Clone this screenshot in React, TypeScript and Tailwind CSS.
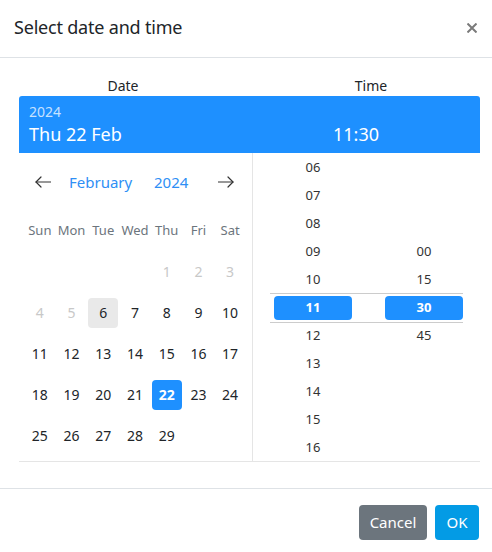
import React from "react";

const font = { fontFamily: '"Noto Sans", "Open Sans", sans-serif' };

function ArrowLeft() {
  return (
    <svg width="16" height="12" viewBox="0 0 16 12" fill="none" stroke="#333" strokeWidth="1.2" strokeLinecap="round" strokeLinejoin="round">
      <path d="M15.5 6H1" />
      <path d="M6 1L1 6l5 5" />
    </svg>
  );
}
function ArrowRight() {
  return (
    <svg width="16" height="12" viewBox="0 0 16 12" fill="none" stroke="#333" strokeWidth="1.2" strokeLinecap="round" strokeLinejoin="round">
      <path d="M0.5 6H15" />
      <path d="M10 1l5 5-5 5" />
    </svg>
  );
}

const weekdays = ["Sun", "Mon", "Tue", "Wed", "Thu", "Fri", "Sat"];
type Cell = { d: number | null; muted?: boolean; today?: boolean; sel?: boolean };
const rows: Cell[][] = [
  [{ d: null }, { d: null }, { d: null }, { d: null }, { d: 1, muted: true }, { d: 2, muted: true }, { d: 3, muted: true }],
  [{ d: 4, muted: true }, { d: 5, muted: true }, { d: 6, today: true }, { d: 7 }, { d: 8 }, { d: 9 }, { d: 10 }],
  [{ d: 11 }, { d: 12 }, { d: 13 }, { d: 14 }, { d: 15 }, { d: 16 }, { d: 17 }],
  [{ d: 18 }, { d: 19 }, { d: 20 }, { d: 21 }, { d: 22, sel: true }, { d: 23 }, { d: 24 }],
  [{ d: 25 }, { d: 26 }, { d: 27 }, { d: 28 }, { d: 29 }, { d: null }, { d: null }],
];

const hours = ["06", "07", "08", "09", "10", "11", "12", "13", "14", "15", "16"];
const minutes = ["00", "15", "30", "45"];

export default function App() {
  return (
    <div className="w-[492px] h-[552px] bg-white flex flex-col" style={font}>
      {/* header */}
      <div className="h-[58px] border-b border-[#dee2e6] flex items-center justify-between pl-[14px] pr-[15px] pb-[2px]">
        <div className="text-[18px] tracking-[-0.2px] text-[#212529]">Select date and time</div>
        <svg width="10" height="10" viewBox="0 0 10 10" stroke="#7a7a7a" strokeWidth="2" strokeLinecap="butt">
          <path d="M0.5 0.5l9 9M9.5 0.5l-9 9" />
        </svg>
      </div>

      {/* body */}
      <div className="pt-[17px] pl-[19px] pr-[12px]">
        <div className="flex h-[21px] items-center text-[14px] text-[#212529]">
          <div className="w-[208px] text-center">Date</div>
          <div className="w-[80px] ml-[104px] text-center">Time</div>
        </div>

        <div className="h-[57px] bg-[#1e90ff] rounded-t-[3px] text-white pl-[10px] pt-[7px]">
          <div className="text-[14px] leading-[18px] text-white/75">2024</div>
          <div className="flex text-[18px] leading-[27px]">
            <div className="w-[304px]">Thu 22 Feb</div>
            <div>11:30</div>
          </div>
        </div>

        <div className="h-[309px] border-b border-[#e5e5e5] flex">
          {/* calendar */}
          <div className="w-[234px] border-r border-[#e5e5e5]">
            <div className="pt-[15px] h-[43px] flex items-center">
              <div className="ml-[16px] w-[16px] flex"><ArrowLeft /></div>
              <div className="ml-[18px] w-[66px] text-[15px] text-[#2e8ff5]">February</div>
              <div className="ml-[19px] w-[36px] text-[15px] text-[#2e8ff5]">2024</div>
              <div className="ml-[28px] w-[16px] flex"><ArrowRight /></div>
            </div>
            <div className="mt-[14px] ml-[5px] w-[222px] grid grid-cols-7">
              {weekdays.map((w) => (
                <div key={w} className="h-[41px] flex items-center justify-center text-[13px] text-[#6c757d]">
                  {w}
                </div>
              ))}
              {rows.flat().map((c, i) => (
                <div key={i} className="h-[41px] flex items-center justify-center">
                  {c.d !== null && (
                    <div
                      className={
                        "w-[30px] h-[30px] rounded-[4px] flex items-center justify-center text-[14px] " +
                        (c.sel
                          ? "bg-[#1e90ff] text-white font-bold"
                          : c.today
                          ? "bg-[#e9e9e9] text-[#212529]"
                          : c.muted
                          ? "text-[#c8c8c8]"
                          : "text-[#212529]")
                      }
                    >
                      {c.d}
                    </div>
                  )}
                </div>
              ))}
            </div>
          </div>

          {/* time */}
          <div className="flex-1 relative flex pl-[21px] pt-[1px]">
            <div className="absolute left-[17px] top-[140px] w-[193px] h-[30px] border-y border-[#cccccc]" />
            <div className="w-[78px]">
              {hours.map((h) => (
                <div key={h} className="h-[28px] flex items-center justify-center">
                  {h === "11" ? (
                    <div className="relative w-[78px] h-[24px] rounded-[4px] bg-[#1e90ff] text-white font-bold text-[13px] flex items-center justify-center">
                      {h}
                    </div>
                  ) : (
                    <span className="text-[13px] text-[#333]">{h}</span>
                  )}
                </div>
              ))}
            </div>
            <div className="w-[78px] ml-[33px] pt-[84px]">
              {minutes.map((m) => (
                <div key={m} className="h-[28px] flex items-center justify-center">
                  {m === "30" ? (
                    <div className="relative w-[78px] h-[24px] rounded-[4px] bg-[#1e90ff] text-white font-bold text-[13px] flex items-center justify-center">
                      {m}
                    </div>
                  ) : (
                    <span className="text-[13px] text-[#333]">{m}</span>
                  )}
                </div>
              ))}
            </div>
          </div>
        </div>
      </div>

      {/* footer */}
      <div className="mt-[26px] border-t border-[#dee2e6] pt-[16px] pr-[13px] flex justify-end gap-[8px]">
        <button className="h-[35px] w-[68px] rounded-[4px] bg-[#6c757d] text-white text-[15px]">Cancel</button>
        <button className="h-[35px] w-[44px] rounded-[4px] bg-[#039be5] text-white text-[15px]">OK</button>
      </div>
    </div>
  );
}
